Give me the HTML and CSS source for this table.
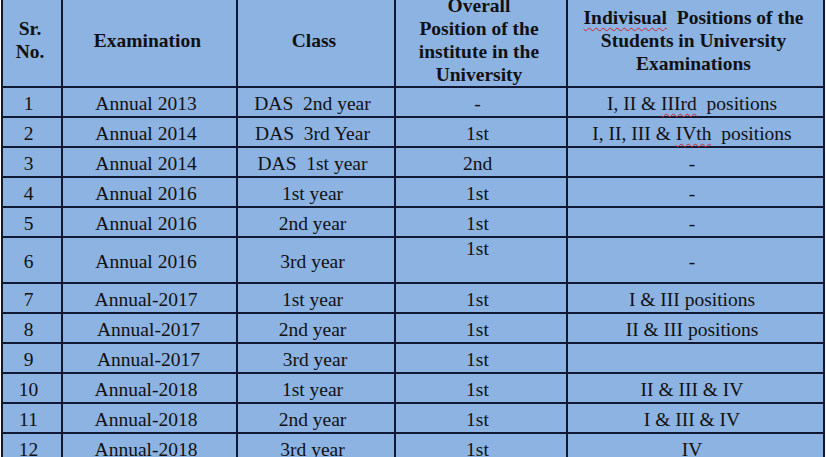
FILE: index.html
```html
<!DOCTYPE html>
<html>
<head>
<meta charset="utf-8">
<link rel="stylesheet" href="styles.css">
</head>
<body>
<table class="results">
  <colgroup>
    <col class="c1"><col class="c2"><col class="c3"><col class="c4"><col class="c5">
  </colgroup>
  <thead>
    <tr class="head">
      <th>Sr.<br>No.</th>
      <th>Examination</th>
      <th>Class</th>
      <th>Overall<br>Position of the<br>institute in the<br>University</th>
      <th><span class="sp">Indivisual</span>&nbsp; Positions of the<br>Students in University<br>Examinations</th>
    </tr>
  </thead>
  <tbody>
    <tr><td>1</td><td>Annual 2013</td><td>DAS&nbsp; 2nd year</td><td>-</td><td>I, II &amp; <span class="sp">IIIrd</span>&nbsp; positions</td></tr>
    <tr><td>2</td><td>Annual 2014</td><td>DAS&nbsp; 3rd Year</td><td>1st</td><td>I, II, III &amp; <span class="sp">IVth</span>&nbsp; positions</td></tr>
    <tr><td>3</td><td>Annual 2014</td><td>DAS&nbsp; 1st year</td><td>2nd</td><td>-</td></tr>
    <tr><td>4</td><td>Annual 2016</td><td>1st year</td><td>1st</td><td>-</td></tr>
    <tr><td>5</td><td>Annual 2016</td><td>2nd year</td><td>1st</td><td>-</td></tr>
    <tr class="tall"><td>6</td><td>Annual 2016</td><td>3rd year</td><td class="top">1st</td><td>-</td></tr>
    <tr><td>7</td><td>Annual-2017</td><td>1st year</td><td>1st</td><td>I &amp; III positions</td></tr>
    <tr><td>8</td><td>&nbsp;Annual-2017</td><td>2nd year</td><td>1st</td><td>II &amp; III positions</td></tr>
    <tr><td>9</td><td>&nbsp;Annual-2017</td><td>&nbsp;3rd year</td><td>1st</td><td></td></tr>
    <tr><td>10</td><td>Annual-2018</td><td>1st year</td><td>1st</td><td>II &amp; III &amp; IV</td></tr>
    <tr><td>11</td><td>Annual-2018</td><td>2nd year</td><td>1st</td><td>I &amp; III &amp; IV</td></tr>
    <tr><td>12</td><td>Annual-2018</td><td>3rd year</td><td>1st</td><td>IV</td></tr>
  </tbody>
</table>
</body>
</html>
```
FILE: styles.css
```css
html, body {
  margin: 0;
  padding: 0;
  background: #ffffff;
  overflow: hidden;
}

.results {
  margin: -8px 0 0 1px;
  width: 823px;
  table-layout: fixed;
  border-collapse: collapse;
  background: #8db3e2;
  color: #111111;
  font-family: "Liberation Serif", "Times New Roman", serif;
  font-size: 19.5px;
}

.c1 { width: 60px; }
.c2 { width: 175px; }
.c3 { width: 158px; }
.c4 { width: 172px; }
.c5 { width: 257px; }

.results th,
.results td {
  border: 2px solid #101833;
  text-align: center;
  vertical-align: middle;
  padding: 3px 7px 0 0;
  line-height: 22px;
  white-space: nowrap;
}

.results th {
  font-weight: bold;
  line-height: 23px;
  padding: 0 4px 0 0;
}

.head {
  height: 90px;
}

.results tbody tr {
  height: 30px;
}

.results tbody tr.tall {
  height: 46px;
}

.results td.top {
  vertical-align: top;
  padding-top: 0;
}

.sp {
  text-decoration: underline wavy #d02020;
  text-decoration-thickness: 1px;
  text-underline-offset: 3px;
}
```
